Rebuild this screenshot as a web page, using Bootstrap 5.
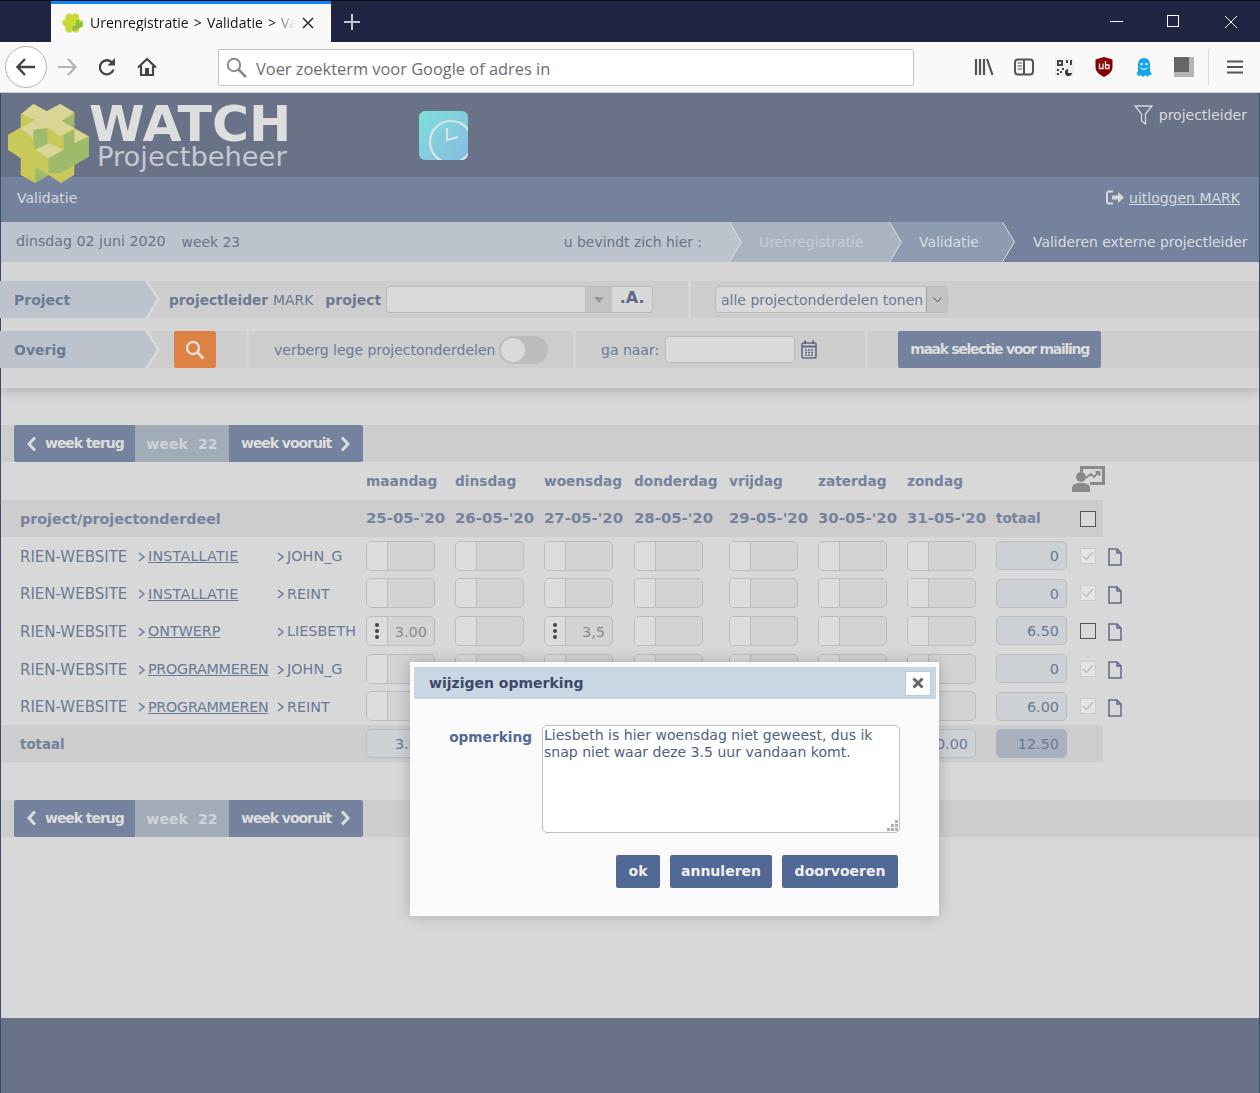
<!DOCTYPE html>
<html lang="nl">
<head>
<meta charset="utf-8">
<title>Urenregistratie</title>
<link href="https://cdn.jsdelivr.net/npm/bootstrap@5.3.0/dist/css/bootstrap.min.css" rel="stylesheet">
<style>
html,body{height:1093px;overflow:hidden}
body{font-family:"DejaVu Sans",sans-serif;font-size:14px;color:#6a7a95;background:#d8d8d8;line-height:1.2}
.chrome-tabs{height:42px;background:#1f2443;border-top:1px solid #0c0c14;padding-left:51px;font-family:"Open Sans",sans-serif}
.chrome-tab{width:280px;height:41px;background:#f9f9fa;border-top:3px solid #0a84ff;padding-left:11px;color:#18181a;font-size:14px;position:relative}
.tab-title{width:206px;white-space:nowrap;overflow:hidden;margin-left:7px;word-spacing:1.5px;-webkit-mask-image:linear-gradient(90deg,#000 88%,transparent)}
.tab-x{margin-left:5px}
.chrome-plus{margin-left:12px}
.win-ctrls{margin-left:auto}
.win-ctrls svg{display:block;margin:0 22px}
.chrome-bar{height:51px;background:#f9f9fa;border-bottom:1px solid #ccc;padding-left:5px;font-family:"Open Sans",sans-serif}
.back-circle{width:42px;height:42px;border:1px solid #b5b5b5;border-radius:50%;background:#fff;flex:none}
.nav-ic{width:40px;flex:none}
.addr{width:696px;height:37px;margin-left:51px;border:1px solid #c6c6c6;border-radius:2px;background:#fff;color:#6d6d6d;font-size:16.4px;padding-left:7px;gap:9px;flex:none}
.addr span{padding-top:3px}
.ext-group{margin-left:50px}
.ext-ic{width:40px;flex:none}
.bar-sep{width:1px;height:36px;background:#d9d9d9;margin:0 6px 0 4px}
.app{height:1000px;border-left:1px solid #37506a;border-right:1px solid #37506a}
.app-head{height:84px;background:#6a7287;padding:11px 12px 0 7px;flex:none;position:relative;z-index:6}
.logo-mark{flex:none;overflow:visible}
.logo-txt{margin-top:-1px}
.logo-big{font-size:50.5px;font-weight:700;color:#dedede;line-height:41px}
.logo-small{font-size:27.3px;color:#c4c8d0;line-height:30px;margin-left:8px;margin-top:-2px}
.clock-wrap{margin-left:128px;margin-top:7px}
.who{margin-left:auto;color:#d8d8d8;gap:6px;margin-top:1px}
.app-sub{height:45px;background:#75829d;color:#d6d9df;padding:0 19px 3px 16px;flex:none}
.crumbs{height:40px;background:#bcc3cc;flex:none;font-size:13.9px}
.crumb{height:40px;position:relative;flex:none;clip-path:polygon(0 0,calc(100% - 12px) 0,100% 50%,calc(100% - 12px) 100%,0 100%)}
.crumb::after{content:"";position:absolute;right:0;top:0;bottom:0;width:13px;background:#e1e4e8;clip-path:polygon(0 0,1px 0,100% 50%,1px 100%,0 100%,calc(100% - 1px) 50%)}
.crumb-home{width:741px;background:#bcc3cc;color:#6a7287;padding-left:15px;z-index:4}
.crumb-home .date-txt{font-size:14.2px}
.crumb-home .here{margin-left:auto;margin-right:40px}
.crumb-a{width:172px;margin-left:-12px;background:#a9b4bf;color:#c7ccd2;padding-left:29px;z-index:3}
.crumb-b{width:125px;margin-left:-12px;background:#8d9cb0;color:#d8dbe0;padding-left:29px;z-index:2}
.crumb-c{flex:1 1 auto;margin-left:-12px;background:#75829d;color:#dcdcdc;padding-left:30px;z-index:1;clip-path:none}
.crumb-c::after{display:none}
.filter-panel{height:126px;background:#d5d5d5;box-shadow:0 4px 10px rgba(0,0,0,.16);padding-top:19px;flex:none;position:relative}
.f-row{height:37px;gap:3px}
.f-row+.f-row{margin-top:13px}
.f-seg{background:#cdcdcd;height:37px;padding-top:1px}
.seg-project{width:687px}
.seg-search{width:245px}
.seg-toggle{width:324px;padding-left:25px}
.seg-goto{width:289px;padding-left:25px}
.tag{width:160px;height:37px;background:#dadada;position:relative;flex:none;clip-path:polygon(0 0,148px 0,160px 50%,148px 100%,0 100%);margin-left:-1px;margin-top:-1px}
.tag span{display:flex;align-items:center;height:37px;width:157px;padding:1px 0 0 14px;background:#bcc3cc;font-weight:700;color:#6a7a95;clip-path:polygon(0 0,145px 0,157px 50%,145px 100%,0 100%)}
.b{font-weight:700}
.p-lead{font-size:13.7px;margin-left:9px}
.p-mark{margin-left:5px;font-size:13.9px}
.p-proj{margin-left:12px}
.fld{background:#dadada;border:1px solid #bcbcbc;height:27px}
.combo-in{width:200px;border-radius:4px 0 0 4px;margin-left:5px;margin-top:-1px}
.combo-arr{width:26px;height:27px;background:#c3c3c3;border:1px solid #bcbcbc;border-width:1px 0;margin-top:-1px}
.combo-a{width:41px;height:27px;background:#d8d8d8;border:1px solid #bcbcbc;border-left:0;border-radius:0 4px 4px 0;font-weight:700;color:#5a6a88;font-size:16px;line-height:22px;text-align:center;margin-top:-1px}
.sel{width:233px;height:27px;background:#d9d9d9;border:1px solid #bcbcbc;border-radius:4px;padding-left:5px;margin-left:24px;overflow:hidden;white-space:nowrap;margin-top:-1px}
.sel>span{padding-top:1px}
.sel i{margin-left:auto;width:21px;height:25px;background:#c3c3c3;border-left:1px solid #a0a0a0;display:flex;align-items:center;justify-content:center;flex:none}
.btn.search-btn{width:42px;height:37px;background:#dd8244;border:0;border-radius:2px;padding:0;margin-left:14px;margin-top:-1px}
.toggle-pill{width:49px;height:28px;background:#bcbcbc;border-radius:14px;padding:2px;margin-left:4px;flex:none;margin-top:-1px}
.toggle-pill span{display:block;width:24px;height:24px;border-radius:50%;background:#dadada}
.goto-in{width:130px;margin-left:6px;border-radius:4px;margin-top:-1px}
.cal-ic{margin-left:6px;margin-top:-1px}
.btn.mail-btn{background:#75829d;border:0;border-radius:2px;color:#dcdcdc;height:37px;font-weight:700;font-size:14px;letter-spacing:-1.3px;padding:0;margin-left:30px;width:203px;white-space:nowrap;margin-top:-1px}
.gap-top{height:37px;flex:none}
.gap-mid{height:38px;flex:none}
.week-bar{height:37px;background:#cdcdcd;padding-left:13px;flex:none}
.week-bar .btn-group{gap:1px}
.week-bar .btn{height:37px;border:0;border-radius:2px;font-size:14px;font-weight:700;color:#dcdcdc;background:#75829d;letter-spacing:-1.05px;display:flex;align-items:center;flex:none}
.week-bar .btn.w-back{width:121px;padding:0 0 0 13px;gap:8px;border-radius:2px 0 0 2px}
.week-bar .btn.w-next{width:134px;padding:0 0 0 12px;gap:9px;border-radius:0 2px 2px 0}
.week-bar .btn.w-now,.week-bar .btn.w-now:disabled{background:#a1acb7;color:#d0d3d6;opacity:1;letter-spacing:.1px;word-spacing:5px;width:94px;justify-content:center;padding:2px 0 0}
.grid-row{display:grid;grid-template-columns:365px 89px 89px 90px 95px 89px 89px 89px 84px 23px;width:1102px;align-items:center;flex:none}
.grid-h1{height:38px;font-weight:700;color:#75829d;font-size:13.7px}
.grid-h2{height:37px;background:#cdcdcd;font-weight:700;color:#75829d;font-size:14.9px}
.grid-h2 .name-cell{font-size:14.3px}
.grid-h2 .tot-lab{font-size:13.4px;padding-top:1px}
.grid-r{height:37.6px;color:#6a7a95}
.grid-t{height:37px;background:#cdcdcd}
.name-cell{padding:2px 0 0 19px;display:flex;align-items:center;white-space:nowrap;position:relative}
.tot-name{font-size:13.4px;color:#75829d;padding-top:4px}
.n1{width:117px;flex:none;font-size:15px}
.n2{width:140px;flex:none;display:flex;align-items:center}
.n2 u{text-decoration-thickness:1px;font-size:14.3px}
.n2 u.wide{letter-spacing:.2px}
.n2 u.narrow{letter-spacing:-.25px}
.n3{flex:none;margin-left:-1px;display:flex;align-items:center;font-size:14.4px}
.chev{font-size:0;margin-right:2px;flex:none}
.day{width:69px;height:30px;border:1px solid #bcbcbc;border-radius:5px;background:#d3d3d3;display:flex;overflow:hidden;font-size:14.5px}
.day i{width:21px;background:#dcdcdc;border-right:1px solid #bcbcbc;flex:none;display:flex;flex-direction:column;align-items:center;justify-content:center;gap:2px}
.day i b{width:4px;height:4px;border-radius:50%;background:#444;display:block}
.day span{flex:1;text-align:right;padding:1px 7px 0 0;line-height:28px;color:#8a8a8a}
.tot{width:71px;height:29px;border:1px solid #bcbcbc;border-radius:5px;background:#cdd0d5;text-align:right;padding-right:7px;line-height:29px;color:#6a7a95;font-size:14.4px}
.tot.sm{width:69px}
.tot.grand{background:#a9b0bf;border-color:#a9b0bf}
.chk{width:16px;height:16px;display:block;border:1.5px solid #555;background:#dadada;flex:none}
.chk.on{border:1px solid #ccc;background:#e4e4e4}
.chk svg{display:block}
.chk-cell{display:flex;align-items:center;position:relative}
.doc-ic{margin-left:12px;flex:none;margin-top:3px}
.brd-ic{margin-left:-8px;margin-top:-7px;flex:none}
.app-foot{height:75px;background:#6a7287;flex:none;margin-top:auto}
.dlg.card{position:absolute;left:409px;top:569px;width:529px;height:254px;background:#fafafa;box-shadow:0 0 14px rgba(0,0,0,.22);padding:5px 3px 0 4px;border:0;border-radius:0;z-index:8}
.dlg-head{height:32px;background:#c9d6e4;font-weight:700;color:#3e4a6b;padding:0 5px 0 15px;font-size:14px}
.dlg-x{width:26px;height:25px;background:#fff;border:1px solid #bccbd9;display:flex;align-items:center;justify-content:center;padding:0}
.dlg-body{padding:26px 36px 0 0}
.dlg-lab{width:118px;text-align:right;font-weight:700;color:#526996;padding-top:4px;flex:none;margin-right:10px;font-size:13.7px}
.ta-wrap{position:relative;flex:none}
.form-control.dlg-ta{width:358px;height:108px;font-family:"DejaVu Sans",sans-serif;font-size:14.05px;line-height:17px;padding:1px;color:#4f6284;border:1px solid #c0c0c0;border-radius:5px;background:#fff;resize:none;display:block}
.grip{position:absolute;right:2px;bottom:2px}
.dlg-btns{gap:10px;margin-top:22px;padding-right:2px}
.btn.dlg-btn{height:33px;background:#526996;color:#f0f0f0;font-weight:700;font-size:14px;border:0;border-radius:2px;padding:0}
.w-ok{width:44px}
.w-ann{width:102px}
.w-door{width:116px}
</style>
</head>
<body class="m-0">
<div class="chrome-tabs d-flex align-items-start">
  <div class="chrome-tab d-flex align-items-center">
    <svg width="21" height="20" viewBox="24 28 242 236"><polygon fill="#c9d936" points="62,58 100,28 140,50 180,28 222,52 222,100 266,125 266,185 222,210 222,240 182,264 145,240 105,264 62,240 62,190 24,165 24,120 62,98"/><polygon fill="#8bbf3f" points="145,190 190,165 190,120 222,105 222,145 266,125 266,185 180,235 145,235"/></svg>
    <div class="tab-title">Urenregistratie &gt; Validatie &gt; Validatie</div>
    <svg class="tab-x" width="14" height="14" viewBox="0 0 14 14"><path d="M2 2 12 12M12 2 2 12" stroke="#333" stroke-width="1.6"/></svg>
  </div>
  <svg class="chrome-plus align-self-center" width="18" height="18" viewBox="0 0 18 18"><path d="M9 1V17M1 9H17" stroke="#c4c6d0" stroke-width="2"/></svg>
  <div class="win-ctrls d-flex align-items-center align-self-center">
    <svg width="13" height="13" viewBox="0 0 13 13"><path d="M0 6.500H13" stroke="#fff"/></svg>
    <svg width="13" height="13" viewBox="0 0 13 13"><rect x=".5" y=".5" width="11" height="11" fill="none" stroke="#fff"/></svg>
    <svg width="14" height="14" viewBox="0 0 14 14"><path d="M1 1 13 13M13 1 1 13" stroke="#fff"/></svg>
  </div>
</div>
<div class="chrome-bar d-flex align-items-center">
  <div class="back-circle d-flex align-items-center justify-content-center">
    <svg width="22" height="20" viewBox="0 0 22 20"><path d="M20 10H3M10 2 2.500 10 10 18" fill="none" stroke="#444" stroke-width="2.4"/></svg>
  </div>
  <div class="nav-ic d-flex justify-content-center"><svg width="22" height="20" viewBox="0 0 22 20"><path d="M2 10H19M12 2 19.500 10 12 18" fill="none" stroke="#b4b4b4" stroke-width="2.2"/></svg></div>
  <div class="nav-ic d-flex justify-content-center"><svg width="20" height="20" viewBox="0 0 20 20"><path d="M16.500 12.500A7 7 0 1 1 15 5.500" fill="none" stroke="#444" stroke-width="2.3"/><path d="M18 1V8.500H10.500Z" fill="#444"/></svg></div>
  <div class="nav-ic d-flex justify-content-center"><svg width="20" height="20" viewBox="0 0 20 20"><path d="M1 10.500 10 2l9 8.500M4 9v9h12V9" fill="none" stroke="#444" stroke-width="2.2"/><rect x="8" y="11" width="4" height="7" fill="#444"/></svg></div>
  <div class="addr d-flex align-items-center">
    <svg width="21" height="21" viewBox="0 0 21 21"><circle cx="8" cy="8" r="6.200" fill="none" stroke="#8a8a8a" stroke-width="2"/><path d="M12.500 12.500 20 20" stroke="#8a8a8a" stroke-width="2.6"/></svg>
    <span>Voer zoekterm voor Google of adres in</span>
  </div>
  <div class="ext-group d-flex align-items-center">
    <div class="ext-ic d-flex justify-content-center"><svg width="20" height="18" viewBox="0 0 20 18"><path d="M2 1V17M6 1V17M10 1V17M13 1 18.500 17" stroke="#555" stroke-width="2.2" fill="none"/></svg></div>
    <div class="ext-ic d-flex justify-content-center"><svg width="20" height="18" viewBox="0 0 20 18"><rect x="1" y="1.500" width="18" height="15" rx="3" fill="none" stroke="#555" stroke-width="2"/><path d="M10 2V16" stroke="#555" stroke-width="2"/><path d="M3.500 5H8M3.500 8H8M3.500 11H8" stroke="#888" stroke-width="1.4"/></svg></div>
    <div class="ext-ic d-flex justify-content-center"><svg width="19" height="19" viewBox="0 0 19 19"><rect width="19" height="19" rx="1" fill="#eee"/><path d="M2 2H8V8H2ZM4 4V6H6V4Z" fill="#444" fill-rule="evenodd"/><path d="M11 2H13V5H11ZM15 2H17V7H15ZM2 11H4V13H2ZM5 13H7V15H5ZM2 15H4V17H2ZM7 10H9V12H7Z" fill="#444"/><path d="M13 11a3.500 3.500 0 1 0 4 4h-4Z" fill="#333"/></svg></div>
    <div class="ext-ic d-flex justify-content-center"><svg width="18" height="20" viewBox="0 0 18 20"><path d="M9 0 17.500 2.500V10C17.500 15 13 18 9 20 5 18 .5 15 .5 10V2.500Z" fill="#800"/><path d="M4.500 6.500V11.500H8V6.500M10.500 4V11.500H14V8H10.500" fill="none" stroke="#eee" stroke-width="1.300"/></svg></div>
    <div class="ext-ic d-flex justify-content-center"><svg width="16" height="19" viewBox="0 0 16 19"><path d="M8 0C12 0 14 3 14 7V13L16 17 13.500 16.500 12 19 9.500 17 7 19 4.500 17 2 18.500 2 16 0 17 2 13V7C2 3 4 0 8 0Z" fill="#12a5ed"/><circle cx="5.500" cy="6" r="1.200" fill="#fff"/><circle cx="10.500" cy="6" r="1.200" fill="#fff"/><path d="M4.500 9.500C6 12 10 12 11.500 9.500" stroke="#fff" fill="none"/></svg></div>
    <div class="ext-ic d-flex justify-content-center"><svg width="20" height="20" viewBox="0 0 20 20"><rect width="20" height="20" fill="#b5b5b5"/><rect width="15" height="15" fill="#666"/></svg></div>
    <div class="bar-sep"></div>
    <div class="ext-ic d-flex justify-content-center"><svg width="16" height="16" viewBox="0 0 16 16"><path d="M0 2.500H16M0 8H16M0 13.500H16" stroke="#555" stroke-width="2.200"/></svg></div>
  </div>
</div>

<div class="app d-flex flex-column position-relative">
  <div class="app-head d-flex align-items-start">
    <svg class="logo-mark" width="81" height="79" viewBox="24 28 242 236">
      <polygon fill="#c9c95a" points="62,58 100,28 140,50 180,28 222,52 222,100 266,125 266,185 222,210 222,240 182,264 145,240 105,264 62,240 62,190 24,165 24,120 62,98"/>
      <polygon fill="#d9d597" points="65,58 100,28 140,50 180,28 220,52 185,78 222,100 180,125 145,100 105,135 62,100 105,75"/>
      <polygon fill="#9fba6a" points="185,78 222,58 222,100"/>
      <polygon fill="#d9d597" points="222,102 266,125 222,145"/>
      <polygon fill="#9fba6a" points="145,190 190,165 190,120 222,105 222,145 266,125 266,185 222,210 180,235 145,235"/>
      <polygon fill="#9fba6a" points="100,105 142,100 142,150 105,165 100,135"/>
      <polygon fill="#d9d597" points="105,165 145,145 190,165 145,190"/>
      <polygon fill="#9fba6a" points="105,215 145,240 105,264"/>
    </svg>
    <div class="logo-txt">
      <div class="logo-big">WATCH</div>
      <div class="logo-small">Projectbeheer</div>
    </div>
    <div class="clock-wrap">
      <svg width="49" height="49" viewBox="0 0 49 49">
        <defs><linearGradient id="clk" x1="0" y1="0" x2="1" y2="1"><stop offset="0" stop-color="#7fdfd9"/><stop offset="1" stop-color="#86bbe2"/></linearGradient><clipPath id="clkc"><rect width="49" height="49" rx="6"/></clipPath></defs>
        <rect width="49" height="49" rx="6" fill="url(#clk)"/>
        <g clip-path="url(#clkc)" fill="none" stroke="#d9e4e4" stroke-width="2.200"><circle cx="32" cy="31" r="21"/><path d="M28 17V29L39 26"/></g>
      </svg>
    </div>
    <div class="who d-flex align-items-center">
      <svg width="19" height="20" viewBox="0 0 19 20"><path d="M1 1H18L11.500 9V19L7.500 16V9Z" fill="none" stroke="#d8d8d8" stroke-width="1.300"/></svg>
      <span>projectleider</span>
    </div>
  </div>
  <div class="app-sub d-flex align-items-center justify-content-between">
    <span>Validatie</span>
    <span class="d-flex align-items-center gap-1">
      <svg width="19" height="15" viewBox="0 0 19 15"><path d="M7 1.500H3A2 2 0 0 0 1 3.500V11.500A2 2 0 0 0 3 13.500H7" fill="none" stroke="#d8d8d8" stroke-width="2"/><path d="M6 5.500H12V2L18 7.500 12 13V9.500H6Z" fill="#d8d8d8"/></svg>
      <u>uitloggen MARK</u>
    </span>
  </div>
  <div class="crumbs d-flex">
    <div class="crumb crumb-home d-flex align-items-center">
      <span class="date-txt">dinsdag 02 juni 2020</span><span class="ms-3">week 23</span><span class="here">u bevindt zich hier :</span>
    </div>
    <div class="crumb crumb-a d-flex align-items-center">Urenregistratie</div>
    <div class="crumb crumb-b d-flex align-items-center">Validatie</div>
    <div class="crumb crumb-c d-flex align-items-center">Valideren externe projectleider</div>
  </div>
  <div class="filter-panel">
    <div class="f-row d-flex">
      <div class="f-seg seg-project d-flex align-items-center">
        <div class="tag"><span>Project</span></div>
        <span class="b p-lead">projectleider</span><span class="p-mark">MARK</span>
        <span class="b p-proj">project</span>
        <div class="fld combo-in"></div>
        <div class="combo-arr d-flex align-items-center justify-content-center"><svg width="10" height="6" viewBox="0 0 10 6"><path d="M0 0H10L5 6Z" fill="#999"/></svg></div>
        <div class="combo-a">.A.</div>
      </div>
      <div class="f-seg flex-grow-1 d-flex align-items-center">
        <div class="sel d-flex align-items-center"><span>alle projectonderdelen tonen</span><i><svg width="9" height="6" viewBox="0 0 9 6"><path d="M.5.500 4.500 5 8.500.500" fill="none" stroke="#555"/></svg></i></div>
      </div>
    </div>
    <div class="f-row d-flex">
      <div class="f-seg seg-search d-flex align-items-center">
        <div class="tag"><span>Overig</span></div>
        <button type="button" class="btn search-btn d-flex align-items-center justify-content-center"><svg width="20" height="20" viewBox="0 0 20 20"><circle cx="8" cy="8" r="6" fill="none" stroke="#e6e0da" stroke-width="2.400"/><path d="M12.500 12.500 18.500 18.500" stroke="#e6e0da" stroke-width="2.800"/></svg></button>
      </div>
      <div class="f-seg seg-toggle d-flex align-items-center">
        <span>verberg lege projectonderdelen</span>
        <div class="toggle-pill"><span></span></div>
      </div>
      <div class="f-seg seg-goto d-flex align-items-center">
        <span>ga naar:</span>
        <div class="fld goto-in"></div>
        <svg class="cal-ic" width="16" height="19" viewBox="0 0 16 19"><rect x="1" y="3" width="14" height="15" rx="1.500" fill="none" stroke="#5f6b85" stroke-width="1.600"/><path d="M1 6.500H15" stroke="#5f6b85" stroke-width="2"/><path d="M4 .5V4M12 .5V4" stroke="#5f6b85" stroke-width="2"/><path d="M4 10H6M7 10H9M10 10H12M4 12.500H6M7 12.500H9M10 12.500H12M4 15H6M7 15H9M10 15H12" stroke="#5f6b85" stroke-width="1.300"/></svg>
      </div>
      <div class="f-seg flex-grow-1 d-flex align-items-center">
        <button type="button" class="btn mail-btn">maak selectie voor mailing</button>
      </div>
    </div>
  </div>

  <div class="gap-top"></div>
  <div class="week-bar">
    <div class="btn-group">
      <button type="button" class="btn w-back"><svg width="10" height="16" viewBox="0 0 10 16"><path d="M8 1.500 2 8 8 14.500" fill="none" stroke="#dcdcdc" stroke-width="3"/></svg>week terug</button>
      <button type="button" class="btn w-now" disabled>week 22</button>
      <button type="button" class="btn w-next">week vooruit<svg width="10" height="16" viewBox="0 0 10 16"><path d="M2 1.500 8 8 2 14.500" fill="none" stroke="#dcdcdc" stroke-width="3"/></svg></button>
    </div>
  </div>

  <div class="grid-row grid-h1">
    <div></div><div>maandag</div><div>dinsdag</div><div>woensdag</div><div>donderdag</div><div>vrijdag</div><div>zaterdag</div><div>zondag</div><div></div>
    <div class="chk-cell"><svg class="brd-ic" width="34" height="28" viewBox="0 0 34 28"><path d="M8 2H33V21H18V18H30V5H11V8H8Z" fill="#8a8a8a"/><path d="M14 14 19 10 22 13 27 8M23.500 8H27.500V12" fill="none" stroke="#8a8a8a" stroke-width="1.800"/><circle cx="9" cy="13" r="5" fill="#8a8a8a"/><path d="M0 28V24C0 21 3 19 9 19S18 21 18 24V28Z" fill="#8a8a8a"/></svg></div>
  </div>
  <div class="grid-row grid-h2">
    <div class="name-cell">project/projectonderdeel</div><div>25-05-'20</div><div>26-05-'20</div><div>27-05-'20</div><div>28-05-'20</div><div>29-05-'20</div><div>30-05-'20</div><div>31-05-'20</div><div class="tot-lab">totaal</div>
    <div class="chk-cell"><span class="chk"></span></div>
  </div>

  <div class="grid-row grid-r">
    <div class="name-cell"><span class="n1">RIEN-WEBSITE</span><span class="n2"><svg class="chev" width="9" height="10" viewBox="0 0 9 10"><path d="M2 1 7 5 2 9" fill="none" stroke="#6a7a95" stroke-width="1.500"/></svg><u class="wide">INSTALLATIE</u></span><span class="n3"><svg class="chev" width="9" height="10" viewBox="0 0 9 10"><path d="M2 1 7 5 2 9" fill="none" stroke="#6a7a95" stroke-width="1.500"/></svg>JOHN_G</span></div>
    <div class="day"><i></i><span></span></div><div class="day"><i></i><span></span></div><div class="day"><i></i><span></span></div><div class="day"><i></i><span></span></div><div class="day"><i></i><span></span></div><div class="day"><i></i><span></span></div><div class="day"><i></i><span></span></div>
    <div class="tot">0</div>
    <div class="chk-cell"><span class="chk on"><svg width="14" height="14" viewBox="0 0 14 14"><path d="M2 7 5.500 10.500 12 3" fill="none" stroke="#bdbdbd" stroke-width="1.500"/></svg></span><svg class="doc-ic" width="14" height="18" viewBox="0 0 14 18"><path d="M1 1H9L13 5V17H1ZM9 1V5H13" fill="none" stroke="#5f6b85" stroke-width="1.500"/></svg></div>
  </div>
  <div class="grid-row grid-r">
    <div class="name-cell"><span class="n1">RIEN-WEBSITE</span><span class="n2"><svg class="chev" width="9" height="10" viewBox="0 0 9 10"><path d="M2 1 7 5 2 9" fill="none" stroke="#6a7a95" stroke-width="1.500"/></svg><u class="wide">INSTALLATIE</u></span><span class="n3"><svg class="chev" width="9" height="10" viewBox="0 0 9 10"><path d="M2 1 7 5 2 9" fill="none" stroke="#6a7a95" stroke-width="1.500"/></svg>REINT</span></div>
    <div class="day"><i></i><span></span></div><div class="day"><i></i><span></span></div><div class="day"><i></i><span></span></div><div class="day"><i></i><span></span></div><div class="day"><i></i><span></span></div><div class="day"><i></i><span></span></div><div class="day"><i></i><span></span></div>
    <div class="tot">0</div>
    <div class="chk-cell"><span class="chk on"><svg width="14" height="14" viewBox="0 0 14 14"><path d="M2 7 5.500 10.500 12 3" fill="none" stroke="#bdbdbd" stroke-width="1.500"/></svg></span><svg class="doc-ic" width="14" height="18" viewBox="0 0 14 18"><path d="M1 1H9L13 5V17H1ZM9 1V5H13" fill="none" stroke="#5f6b85" stroke-width="1.500"/></svg></div>
  </div>
  <div class="grid-row grid-r">
    <div class="name-cell"><span class="n1">RIEN-WEBSITE</span><span class="n2"><svg class="chev" width="9" height="10" viewBox="0 0 9 10"><path d="M2 1 7 5 2 9" fill="none" stroke="#6a7a95" stroke-width="1.500"/></svg><u>ONTWERP</u></span><span class="n3"><svg class="chev" width="9" height="10" viewBox="0 0 9 10"><path d="M2 1 7 5 2 9" fill="none" stroke="#6a7a95" stroke-width="1.500"/></svg>LIESBETH</span></div>
    <div class="day"><i><b></b><b></b><b></b></i><span>3.00</span></div><div class="day"><i></i><span></span></div><div class="day"><i><b></b><b></b><b></b></i><span>3,5</span></div><div class="day"><i></i><span></span></div><div class="day"><i></i><span></span></div><div class="day"><i></i><span></span></div><div class="day"><i></i><span></span></div>
    <div class="tot">6.50</div>
    <div class="chk-cell"><span class="chk"></span><svg class="doc-ic" width="14" height="18" viewBox="0 0 14 18"><path d="M1 1H9L13 5V17H1ZM9 1V5H13" fill="none" stroke="#5f6b85" stroke-width="1.500"/></svg></div>
  </div>
  <div class="grid-row grid-r">
    <div class="name-cell"><span class="n1">RIEN-WEBSITE</span><span class="n2"><svg class="chev" width="9" height="10" viewBox="0 0 9 10"><path d="M2 1 7 5 2 9" fill="none" stroke="#6a7a95" stroke-width="1.500"/></svg><u class="narrow">PROGRAMMEREN</u></span><span class="n3"><svg class="chev" width="9" height="10" viewBox="0 0 9 10"><path d="M2 1 7 5 2 9" fill="none" stroke="#6a7a95" stroke-width="1.500"/></svg>JOHN_G</span></div>
    <div class="day"><i></i><span></span></div><div class="day"><i></i><span></span></div><div class="day"><i></i><span></span></div><div class="day"><i></i><span></span></div><div class="day"><i></i><span></span></div><div class="day"><i></i><span></span></div><div class="day"><i></i><span></span></div>
    <div class="tot">0</div>
    <div class="chk-cell"><span class="chk on"><svg width="14" height="14" viewBox="0 0 14 14"><path d="M2 7 5.500 10.500 12 3" fill="none" stroke="#bdbdbd" stroke-width="1.500"/></svg></span><svg class="doc-ic" width="14" height="18" viewBox="0 0 14 18"><path d="M1 1H9L13 5V17H1ZM9 1V5H13" fill="none" stroke="#5f6b85" stroke-width="1.500"/></svg></div>
  </div>
  <div class="grid-row grid-r">
    <div class="name-cell"><span class="n1">RIEN-WEBSITE</span><span class="n2"><svg class="chev" width="9" height="10" viewBox="0 0 9 10"><path d="M2 1 7 5 2 9" fill="none" stroke="#6a7a95" stroke-width="1.500"/></svg><u class="narrow">PROGRAMMEREN</u></span><span class="n3"><svg class="chev" width="9" height="10" viewBox="0 0 9 10"><path d="M2 1 7 5 2 9" fill="none" stroke="#6a7a95" stroke-width="1.500"/></svg>REINT</span></div>
    <div class="day"><i></i><span></span></div><div class="day"><i></i><span></span></div><div class="day"><i></i><span></span></div><div class="day"><i></i><span></span></div><div class="day"><i></i><span></span></div><div class="day"><i></i><span></span></div><div class="day"><i></i><span></span></div>
    <div class="tot">6.00</div>
    <div class="chk-cell"><span class="chk on"><svg width="14" height="14" viewBox="0 0 14 14"><path d="M2 7 5.500 10.500 12 3" fill="none" stroke="#bdbdbd" stroke-width="1.500"/></svg></span><svg class="doc-ic" width="14" height="18" viewBox="0 0 14 18"><path d="M1 1H9L13 5V17H1ZM9 1V5H13" fill="none" stroke="#5f6b85" stroke-width="1.500"/></svg></div>
  </div>
  <div class="grid-row grid-t">
    <div class="name-cell b tot-name">totaal</div>
    <div class="tot sm">3.00</div><div class="tot sm">0.00</div><div class="tot sm">3.50</div><div class="tot sm">0.00</div><div class="tot sm">6.00</div><div class="tot sm">0.00</div><div class="tot sm">0.00</div>
    <div class="tot grand">12.50</div><div></div>
  </div>

  <div class="gap-mid"></div>
  <div class="week-bar">
    <div class="btn-group">
      <button type="button" class="btn w-back"><svg width="10" height="16" viewBox="0 0 10 16"><path d="M8 1.500 2 8 8 14.500" fill="none" stroke="#dcdcdc" stroke-width="3"/></svg>week terug</button>
      <button type="button" class="btn w-now" disabled>week 22</button>
      <button type="button" class="btn w-next">week vooruit<svg width="10" height="16" viewBox="0 0 10 16"><path d="M2 1.500 8 8 2 14.500" fill="none" stroke="#dcdcdc" stroke-width="3"/></svg></button>
    </div>
  </div>

  <div class="app-foot"></div>

  <div class="dlg card">
    <div class="dlg-head d-flex align-items-center justify-content-between">
      <span>wijzigen opmerking</span>
      <button type="button" class="dlg-x" aria-label="sluiten"><svg width="12" height="12" viewBox="0 0 12 12"><path d="M1.500 1.500 10.500 10.500M10.500 1.500 1.500 10.500" stroke="#666" stroke-width="3"/></svg></button>
    </div>
    <div class="dlg-body">
      <div class="d-flex align-items-start">
        <label class="dlg-lab">opmerking</label>
        <div class="ta-wrap">
          <textarea class="form-control dlg-ta" readonly>Liesbeth is hier woensdag niet geweest, dus ik snap niet waar deze 3.5 uur vandaan komt.</textarea>
          <svg class="grip" width="11" height="11" viewBox="0 0 11 11"><path d="M8 0h3v3H8zM4 4h3v3H4zM8 4h3v3H8zM0 8h3v3H0zM4 8h3v3H4zM8 8h3v3H8z" fill="#b0b0b0"/></svg>
        </div>
      </div>
      <div class="d-flex justify-content-end dlg-btns">
        <button type="button" class="btn dlg-btn w-ok">ok</button>
        <button type="button" class="btn dlg-btn w-ann">annuleren</button>
        <button type="button" class="btn dlg-btn w-door">doorvoeren</button>
      </div>
    </div>
  </div>
</div>
</body>
</html>
